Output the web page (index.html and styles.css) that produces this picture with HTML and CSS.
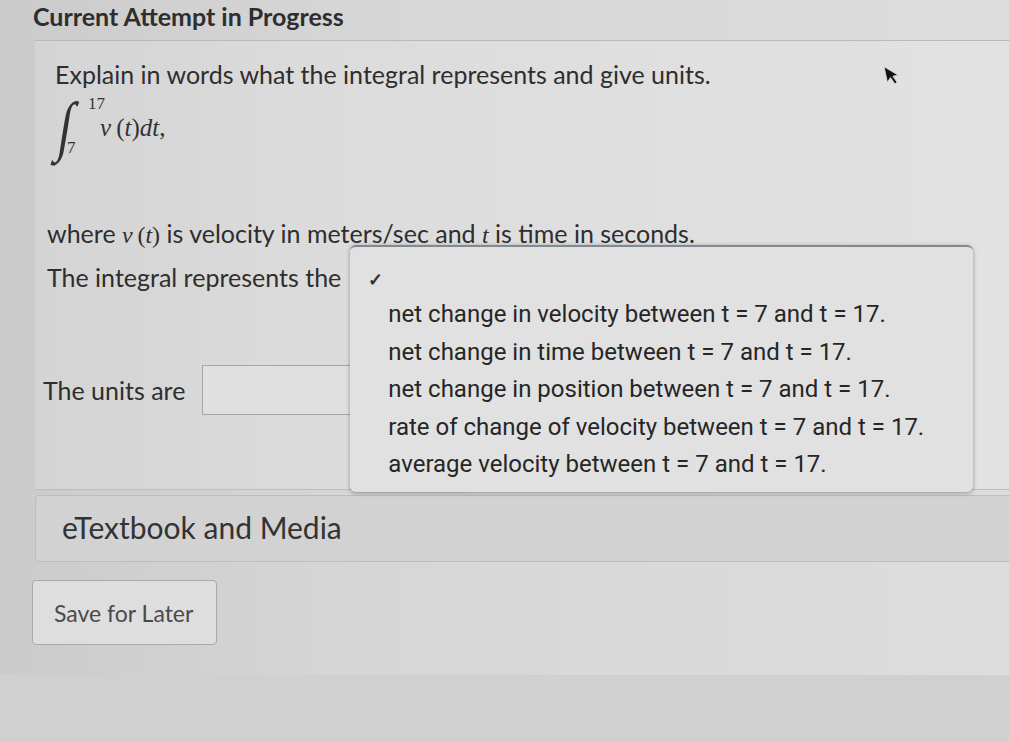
FILE: index.html
```html
<!doctype html>
<html lang="en">
  <head>
    <meta charset="utf-8">
    <title>Current Attempt in Progress</title>
    <link rel="stylesheet" href="styles.css">
  </head>
  <body>

    <header class="attempt-head">
      <h1>Current Attempt in Progress</h1>
    </header>

    <!-- question card -->
    <section class="question">
      <p class="prompt">Explain in words what the integral represents and give units.</p>

      <div class="integral">
        <span class="int-sign">&int;</span>
        <span class="limits">
          <span class="upper">17</span>
          <span class="lower">7</span>
        </span>
        <span class="integrand"><i>v</i>&thinsp;(<i>t</i>)<i>dt</i>,</span>
      </div>

      <p class="where">where <span class="math"><i>v</i>&thinsp;(<i>t</i>)</span> is velocity in meters/sec and <span class="math"><i>t</i></span> is time in seconds.</p>

      <div class="answer-line">
        <span>The integral represents the</span>
        <div class="select">
          <!-- open listbox -->
          <ul class="select-menu">
            <li class="selected"><span class="check">&#10003;</span></li>
            <li>net change in velocity between t = 7 and t = 17.</li>
            <li>net change in time between t = 7 and t = 17.</li>
            <li>net change in position between t = 7 and t = 17.</li>
            <li>rate of change of velocity between t = 7 and t = 17.</li>
            <li>average velocity between t = 7 and t = 17.</li>
          </ul>
        </div>
      </div>

      <div class="units-line">
        <span>The units are</span>
        <input type="text" class="units-input">
      </div>
    </section>

    <div class="media-bar">eTextbook and Media</div>

    <div class="actions">
      <button class="btn-save">Save for Later</button>
    </div>

    <div class="page-foot"></div>

    <svg class="cursor" width="16" height="22" viewBox="0 0 16 22">
      <path d="M1 1 L1 17 L5 13 L8 20 L10.5 19 L7.6 12.2 L13 12.2 Z" fill="#141414" stroke="#d8d8d8" stroke-width="0.8"/>
    </svg>

  </body>
</html>
```

FILE: styles.css
```css
body {
  margin: 0;
  position: relative;
  min-height: 742px;
  background: linear-gradient(90deg, #cbcbcb 0%, #d6d6d6 35%, #dddddd 100%);
  font-family: Lato, "Open Sans", sans-serif;
  color: #2e2e2e;
  overflow: hidden;
}
.attempt-head {
  height: 40px;
  padding-left: 33px;
}
.attempt-head h1 {
  margin: 0;
  padding-top: 1px;
  font-size: 25px;
  font-weight: 700;
  line-height: 30px;
}
/* 题目卡片 */
.question {
  margin-left: 35px;
  height: 450px;
  box-sizing: border-box;
  padding: 18px 0 0 20px;
  border-top: 1px solid #b9b9b9;
  border-bottom: 1px solid #bdbdbd;
  background-color: rgba(255, 255, 255, 0.16);
}
.prompt {
  margin: 0;
  font-size: 25px;
  line-height: 30px;
}
/* 积分式 */
.integral {
  display: flex;
  align-items: center;
  height: 68px;
  margin-top: 3px;
  margin-left: 2px;
  font-family: "Liberation Serif", "DejaVu Serif", serif;
  color: #333;
}
.int-sign {
  font-size: 66px;
  font-style: italic;
  line-height: 68px;
  transform: scaleX(0.75) skewX(-12deg);
}
.limits {
  display: flex;
  flex-direction: column;
  justify-content: space-between;
  height: 62px;
  margin-left: -8px;
  font-size: 17px;
  line-height: 18px;
}
.limits .upper {
  margin-left: 21px;
}
.integrand {
  margin: 4px 0 0 -5px;
  font-size: 25px;
}
.where {
  margin: 0;
  padding-top: 58px;
  margin-left: -8px;
  font-size: 25px;
  line-height: 30px;
}
.math {
  font-family: "Liberation Serif", serif;
  font-size: 24px;
}
.answer-line {
  display: flex;
  align-items: center;
  margin-left: -8px;
  margin-top: 10px;
  font-size: 25px;
  line-height: 30px;
}
.select {
  position: relative;
  width: 140px;
  height: 34px;
  margin-left: 9px;
}
/* 展开的下拉列表 */
.select-menu {
  position: absolute;
  left: 0;
  top: -15px;
  z-index: 2;
  width: 623px;
  height: 247px;
  box-sizing: border-box;
  margin: 0;
  padding: 14px 0 0;
  list-style-type: none;
  border-top: 2px solid #7f8a93;
  border-radius: 6px;
  background-color: #e1e1e1;
  box-shadow: 0 1px 4px rgba(0, 0, 0, 0.35);
  font-family: Roboto, "Liberation Sans", sans-serif;
  font-size: 24px;
  color: #262626;
}
.select-menu li {
  height: 37.5px;
  line-height: 37.5px;
  padding-left: 38px;
}
.select-menu li.selected {
  height: 35px;
  line-height: 35px;
  padding-left: 18px;
}
.check {
  font-size: 18px;
  font-weight: 700;
  color: #333;
}
.units-line {
  display: flex;
  align-items: center;
  gap: 17px;
  margin-left: -12px;
  margin-top: 71px;
  font-size: 25px;
}
.units-input {
  width: 200px;
  height: 50px;
  box-sizing: border-box;
  border: 1px solid #a5a5a5;
  background-color: #e0e0e0;
}
/* 电子书条 */
.media-bar {
  margin: 5px 0 0 35px;
  height: 67px;
  box-sizing: border-box;
  padding-left: 26px;
  border: 1px solid #bdbdbd;
  border-right: 0;
  border-radius: 4px 0 0 4px;
  background-color: #d2d2d2;
  font-size: 30px;
  line-height: 63px;
  color: #333;
}
.actions {
  padding: 18px 0 0 32px;
}
.btn-save {
  width: 185px;
  height: 65px;
  border: 1px solid #a9a9a9;
  border-radius: 4px;
  background-color: #dedede;
  font-family: Lato, sans-serif;
  font-size: 23px;
  color: #4a4a4a;
  text-align: left;
  padding-left: 21px;
}
.page-foot {
  margin-top: 30px;
  height: 80px;
  background-color: #d0d0d0;
}
.cursor {
  position: absolute;
  left: 885px;
  top: 64px;
  transform: rotate(-12deg);
}
```
